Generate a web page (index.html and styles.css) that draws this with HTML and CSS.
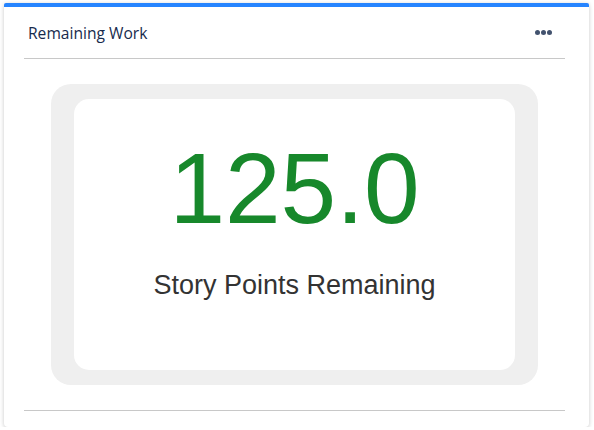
FILE: index.html
```html
<!DOCTYPE html>
<html>
<head>
<meta charset="utf-8">
<link rel="stylesheet" href="styles.css">
</head>
<body>
<div class="card">
  <div class="header">
    <span class="title">Remaining Work</span>
    <span class="more" aria-label="More"><i></i><i></i><i></i></span>
  </div>
  <div class="content">
    <div class="panel">
      <div class="tile">
        <div class="value">125.0</div>
        <div class="label">Story Points Remaining</div>
      </div>
    </div>
  </div>
</div>
</body>
</html>
```
FILE: styles.css
```css
html, body {
  margin: 0;
  padding: 0;
  background: #ffffff;
}
body {
  padding: 3px 5px 0 4px;
}
.card {
  width: 585px;
  height: 424px;
  box-sizing: border-box;
  background: #fff;
  border-top: 4px solid #2684ff;
  border-radius: 2px 2px 4px 4px;
  box-shadow: 0 1px 4px rgba(0, 0, 0, 0.22);
  padding: 0 24px 0 20px;
  display: flex;
  flex-direction: column;
}
.header {
  height: 52px;
  border-bottom: 1px solid #c8c8c8;
  display: flex;
  align-items: center;
  justify-content: space-between;
  padding: 0 13px 0 4px;
  box-sizing: border-box;
}
.title {
  font-family: "Open Sans", "Noto Sans", sans-serif;
  font-size: 15.6px;
  color: #172b4d;
  margin-top: 1px;
}
.more {
  display: flex;
  gap: 1px;
}
.more i {
  display: block;
  width: 5px;
  height: 5px;
  border-radius: 50%;
  background: #42526e;
}
.content {
  padding: 25px 27px;
  border-bottom: 1px solid #c8c8c8;
}
.panel {
  background: #efefef;
  border-radius: 20px;
  padding: 15px 23px;
}
.tile {
  background: #fff;
  border-radius: 15px;
  height: 271px;
  box-sizing: border-box;
  padding-top: 39px;
  display: flex;
  flex-direction: column;
  align-items: center;
  font-family: "Liberation Sans", Arial, sans-serif;
}
.value {
  font-size: 100px;
  line-height: 1;
  color: #17882b;
}
.label {
  margin-top: 34px;
  font-size: 27px;
  line-height: 1;
  color: #333333;
}
```
